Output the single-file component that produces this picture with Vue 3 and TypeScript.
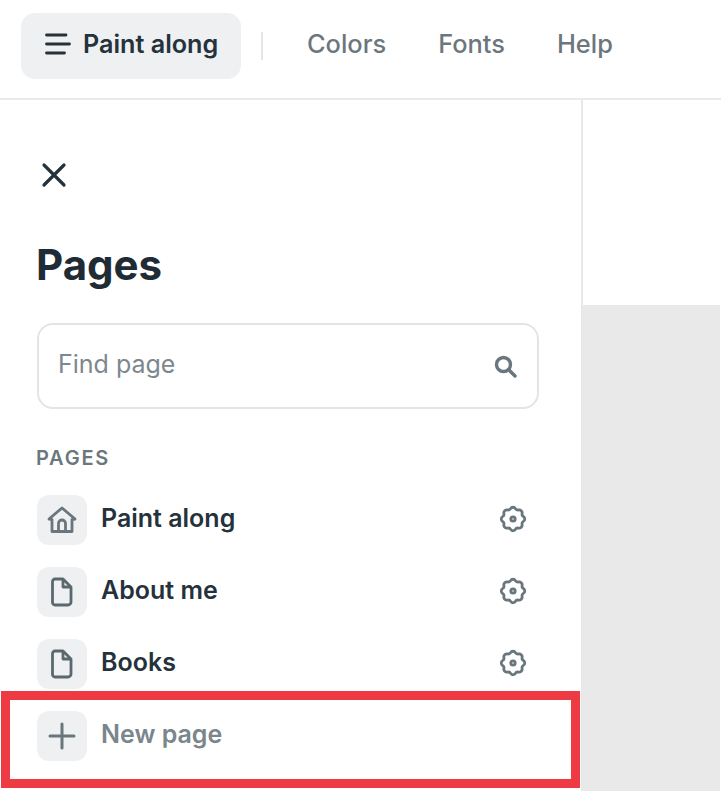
<script setup lang="ts">
interface PageRow { name: string; icon: 'home' | 'file' }
const rows: PageRow[] = [
  { name: 'Paint along', icon: 'home' },
  { name: 'About me', icon: 'file' },
  { name: 'Books', icon: 'file' },
]
const navLinks: string[] = ['Colors', 'Fonts', 'Help']
</script>

<template>
  <div class="app">
    <header class="topbar">
      <button class="menu-btn">
        <svg class="burger" width="26" height="22" viewBox="0 0 26 22" fill="none" stroke="#25323b" stroke-width="2.8" stroke-linecap="round">
          <path d="M1.5 2H21M1.5 11H24.5M1.5 20H19.5" />
        </svg>
        <span class="menu-text">Paint along</span>
      </button>
      <span class="divider"></span>
      <nav class="nav">
        <a v-for="l in navLinks" :key="l">{{ l }}</a>
      </nav>
    </header>
    <div class="body">
      <aside class="sidebar">
        <svg class="close" width="26" height="26" viewBox="0 0 26 26" fill="none" stroke="#25323b" stroke-width="3.2" stroke-linecap="round">
          <path d="M3 3L23 23M23 3L3 23" />
        </svg>
        <h1>Pages</h1>
        <div class="search">
          <span class="find">Find page</span>
          <svg width="24" height="24" viewBox="0 0 24 24" fill="none" stroke="#69767d" stroke-width="3.4" stroke-linecap="round">
            <circle cx="10.5" cy="10.5" r="7" />
            <path d="M16 16L22 22" />
          </svg>
        </div>
        <div class="label">PAGES</div>
        <ul class="list">
          <li v-for="r in rows" :key="r.name" class="row">
            <span class="tile">
              <svg v-if="r.icon === 'home'" width="30" height="28" viewBox="0 0 30 28" fill="none" stroke="#69767d" stroke-width="2.8" stroke-linejoin="round" stroke-linecap="round">
                <path d="M2 13L15 2L28 13L25 13.5V25.5H5V13.5Z" />
                <path d="M11.5 25V17.5A3.5 3.5 0 0 1 18.5 17.5V25" />
              </svg>
              <svg v-else width="22" height="30" viewBox="0 0 22 30" fill="none" stroke="#5b686f" stroke-width="2.8" stroke-linejoin="round">
                <path d="M4 2H12L20 10V25A3 3 0 0 1 17 28H4A2.5 2.5 0 0 1 1.5 25.5V4.5A2.5 2.5 0 0 1 4 2Z" />
                <path d="M12 2V10H20" />
              </svg>
            </span>
            <span class="name">{{ r.name }}</span>
            <svg class="gear" width="28" height="28" viewBox="0 0 28 28" fill="none" stroke="#69767d" stroke-width="2.8" stroke-linejoin="round">
              <path d="M11.6 3.6C12.6 1.8 15.4 1.8 16.4 3.6C17 4.7 18.2 5.2 19.4 4.9C21.4 4.3 23.7 6.6 23.1 8.6C22.8 9.8 23.3 11 24.4 11.6C26.2 12.6 26.2 15.4 24.4 16.4C23.3 17 22.8 18.2 23.1 19.4C23.7 21.4 21.4 23.7 19.4 23.1C18.2 22.8 17 23.3 16.4 24.4C15.4 26.2 12.6 26.2 11.6 24.4C11 23.3 9.8 22.8 8.6 23.1C6.6 23.7 4.3 21.4 4.9 19.4C5.2 18.2 4.7 17 3.6 16.4C1.8 15.4 1.8 12.6 3.6 11.6C4.7 11 5.2 9.8 4.9 8.6C4.3 6.6 6.6 4.3 8.6 4.9C9.8 5.2 11 4.7 11.6 3.6Z" />
              <circle cx="14" cy="14" r="2.2" />
            </svg>
          </li>
          <li class="row new">
            <span class="tile">
              <svg width="28" height="28" viewBox="0 0 28 28" fill="none" stroke="#69767d" stroke-width="3" stroke-linecap="round">
                <path d="M14 2V26M2 14H26" />
              </svg>
            </span>
            <span class="name">New page</span>
          </li>
        </ul>
        <div class="highlight"></div>
      </aside>
      <main class="main">
        <div class="canvas"></div>
      </main>
    </div>
  </div>
</template>

<style scoped>
.app {
  width: 721px;
  height: 791px;
  overflow: hidden;
  background: #fff;
  font-family: Inter, "Liberation Sans", sans-serif;
  color: #25323b;
  display: flex;
  flex-direction: column;
}
.topbar {
  height: 98px;
  flex: none;
  display: flex;
  align-items: center;
  padding: 0 0 0 21px;
  border-bottom: 2px solid #e8eaeb;
}
.menu-btn {
  width: 220px;
  height: 66px;
  margin-top: -7px;
  border: 0;
  border-radius: 14px;
  background: #eef0f1;
  display: flex;
  align-items: center;
  gap: 12px;
  padding: 0 0 0 24px;
  font: 600 25.2px Inter, sans-serif;
  color: #25323b;
}
.burger {
  margin-top: -3px;
}
.menu-text {
  margin-top: -4px;
}
.divider {
  width: 2px;
  height: 28px;
  margin: -7px 0 0 20px;
  background: #e3e6e7;
}
.nav {
  display: flex;
  gap: 52px;
  margin: -11px 0 0 44px;
  font-size: 25.4px;
  font-weight: 500;
  color: #6c777d;
}
.body {
  flex: 1;
  display: flex;
  min-height: 0;
}
.sidebar {
  position: relative;
  width: 581px;
  flex: none;
  box-sizing: content-box;
  border-right: 2px solid #e6e8ea;
  padding: 0;
}
.close {
  display: block;
  margin: 62px 0 0 41px;
}
h1 {
  margin: 49px 0 0 36px;
  font-size: 42px;
  line-height: 56px;
  font-weight: 700;
  color: #1f2c35;
}
.search {
  width: 502px;
  height: 86px;
  box-sizing: border-box;
  margin: 30px 0 0 37px;
  border: 2px solid #e2e5e7;
  border-radius: 16px;
  display: flex;
  align-items: center;
  justify-content: space-between;
  padding: 0 20px 0 19px;
  font-size: 25px;
  color: #7d878d;
}
.find {
  margin-top: -4px;
}
.label {
  margin: 37px 0 0 36px;
  font-size: 20px;
  line-height: 24px;
  font-weight: 600;
  letter-spacing: 1.8px;
  color: #6c777d;
}
.list {
  list-style: none;
  margin: 25px 0 0;
  padding: 0 0 0 37px;
  display: flex;
  flex-direction: column;
  gap: 22px;
}
.row {
  height: 50px;
  width: 490px;
  display: flex;
  align-items: center;
}
.tile {
  width: 50px;
  height: 50px;
  flex: none;
  border-radius: 12px;
  background: #eef0f1;
  display: flex;
  align-items: center;
  justify-content: center;
}
.name {
  margin: -5px 0 0 14px;
  flex: 1;
  font-size: 25px;
  font-weight: 600;
  color: #25323b;
}
.gear {
  margin-top: -2px;
}
.new .name {
  color: #7b868c;
}
.highlight {
  position: absolute;
  left: 1px;
  right: 1px;
  top: 591px;
  height: 97px;
  box-sizing: border-box;
  border: 9px solid #ee3a43;
}
.main {
  flex: 1;
  padding-right: 1px;
  display: flex;
  flex-direction: column;
}
.canvas {
  margin-top: 205px;
  flex: 1;
  background: #e9e9e9;
}
</style>
